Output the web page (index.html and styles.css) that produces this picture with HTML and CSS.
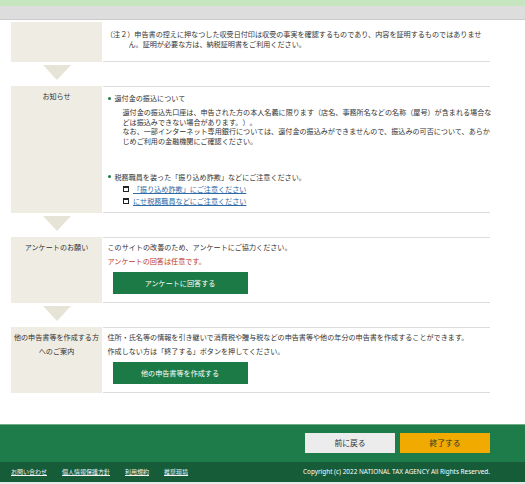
FILE: index.html
```html
<!DOCTYPE html>
<html lang="ja">
<head>
<meta charset="utf-8">
<title>確認</title>
<link rel="stylesheet" href="styles.css">
</head>
<body>
<div class="topbar"></div>
<div class="subbar"></div>
<main class="content">
  <section class="row row-note">
    <div class="label"></div>
    <div class="body">
      <p class="note">（注２）申告書の控えに押なつした収受日付印は収受の事実を確認するものであり、内容を証明するものではありませ<br>ん。証明が必要な方は、納税証明書をご利用ください。</p>
    </div>
  </section>
  <div class="arrow"></div>
  <section class="row">
    <div class="label">お知らせ</div>
    <div class="body body-news">
      <ul class="news">
        <li class="news-item">
          <p class="news-title">還付金の振込について</p>
          <p class="news-text">還付金の振込先口座は、申告された方の本人名義に限ります（店名、事務所名などの名称（屋号）が含まれる場合な<br>どは振込みできない場合があります。）。<br>なお、一部インターネット専用銀行については、還付金の振込みができませんので、振込みの可否について、あらか<br>じめご利用の金融機関にご確認ください。</p>
        </li>
        <li class="news-item news-item-second">
          <p class="news-title">税務職員を装った「振り込め詐欺」などにご注意ください。</p>
          <p class="link-row"><svg class="win-icon" width="6" height="6" viewBox="0 0 6 6"><rect x="0.5" y="0.5" width="5" height="5" fill="#fff" stroke="#222" stroke-width="1"/><rect x="0" y="0" width="6" height="2" fill="#222"/></svg><a href="#">「振り込め詐欺」にご注意ください</a></p>
          <p class="link-row"><svg class="win-icon" width="6" height="6" viewBox="0 0 6 6"><rect x="0.5" y="0.5" width="5" height="5" fill="#fff" stroke="#222" stroke-width="1"/><rect x="0" y="0" width="6" height="2" fill="#222"/></svg><a href="#">にせ税務職員などにご注意ください</a></p>
        </li>
      </ul>
    </div>
  </section>
  <div class="arrow"></div>
  <section class="row">
    <div class="label">アンケートのお願い</div>
    <div class="body">
      <p>このサイトの改善のため、アンケートにご協力ください。</p>
      <p class="optional">アンケートの回答は任意です。</p>
      <button class="btn-green" type="button">アンケートに回答する</button>
    </div>
  </section>
  <div class="arrow"></div>
  <section class="row">
    <div class="label">他の申告書等を作成する方<br>へのご案内</div>
    <div class="body">
      <p>住所・氏名等の情報を引き継いで消費税や贈与税などの申告書等や他の年分の申告書を作成することができます。</p>
      <p>作成しない方は「終了する」ボタンを押してください。</p>
      <button class="btn-green" type="button">他の申告書等を作成する</button>
    </div>
  </section>
</main>
<footer class="footer">
  <div class="footer-actions">
    <button class="btn-back" type="button">前に戻る</button>
    <button class="btn-end" type="button">終了する</button>
  </div>
  <div class="footer-bottom">
    <nav class="footer-links">
      <a href="#">お問い合わせ</a>
      <a href="#">個人情報保護方針</a>
      <a href="#">利用規約</a>
      <a href="#">推奨環境</a>
    </nav>
    <p class="copyright">Copyright (c) 2022 NATIONAL TAX AGENCY All Rights Reserved.</p>
  </div>
</footer>
</body>
</html>
```
FILE: styles.css
```css
* { box-sizing: border-box; }
html, body { margin: 0; padding: 0; }
body {
  width: 525px;
  background: #ffffff;
  color: #333333;
  font-family: "Noto Sans CJK JP", "Noto Sans", sans-serif;
  font-size: 7.1px;
  text-spacing-trim: space-all;
}
p { margin: 0; }
ul { margin: 0; padding: 0; list-style: none; }

.topbar { height: 6px; background: #c6e6c0; }
.subbar { height: 14px; background: #dddddd; border-bottom: 1px solid #cbcbcb; }

.content { margin: 2px 35px 0 11px; }

.row {
  display: grid;
  grid-template-columns: 91px 387px;
  column-gap: 1px;
}
.label {
  background: #efede3;
  text-align: center;
  padding: 3px 0;
  line-height: 14.5px;
  white-space: nowrap;
}
.body {
  border-top: 1px solid #dcdcdc;
  border-bottom: 1px solid #dcdcdc;
  padding: 2px 0 8px 4.5px;
  line-height: 14.5px;
  white-space: nowrap;
}

.row-note .body {
  border-top: none;
  padding: 8px 0 12px 3px;
  line-height: 9.5px;
}
.note { padding-left: 22.5px; text-indent: -22.5px; }

.arrow {
  width: 0;
  height: 0;
  border-top: 15px solid #e6e3d7;
  border-left: 14.5px solid transparent;
  border-right: 14.5px solid transparent;
  margin: 3px 0 6px 32px;
}

.body-news { padding-top: 5px; padding-bottom: 5px; }
.news-item { position: relative; padding-left: 7px; }
.news-item::before {
  content: "";
  position: absolute;
  left: 0.5px;
  top: 4.5px;
  width: 3px;
  height: 3px;
  border-radius: 50%;
  background: #1b7a43;
}
.news-title { line-height: 12px; }
.news-text { margin: 4px 0 0 8px; line-height: 9.6px; }
.news-item-second { margin-top: 24.6px; }
.link-row {
  display: flex;
  align-items: center;
  gap: 4px;
  margin-left: 8.5px;
  line-height: 12px;
}
.win-icon { flex: none; }
.link-row a { color: #2e6aa6; text-decoration: underline; }

.optional { color: #c0392b; }

.btn-green {
  display: block;
  width: 135px;
  height: 22px;
  margin: 3px 0 0 5px;
  border: none;
  background: #1b7a45;
  color: #ffffff;
  font-family: inherit;
  font-size: 7.1px;
  padding: 0;
}

.footer { margin-top: 31px; background: #1d7c49; border-top: 1px solid #6fae88; }
.footer-actions {
  display: flex;
  justify-content: flex-end;
  gap: 5px;
  padding: 8px 35px 9px 0;
}
.btn-back, .btn-end {
  width: 90px;
  height: 20px;
  border: none;
  padding: 0;
  font-family: inherit;
  font-size: 7.8px;
  color: #333333;
}
.btn-back { background: #ececec; }
.btn-end { background: #f0aa00; }

.footer-bottom {
  display: flex;
  justify-content: space-between;
  align-items: center;
  height: 20px;
  padding: 0 35px 0 11px;
  background: #175c38;
  border-bottom: 2px solid #e8e8e8;
  box-sizing: content-box;
}
.footer-links { display: flex; gap: 15px; }
.footer-links a { color: #f2f2f2; font-size: 6px; text-decoration: underline; }
.copyright { color: #ffffff; font-family: "Noto Sans", sans-serif; font-size: 6.4px; }
```
